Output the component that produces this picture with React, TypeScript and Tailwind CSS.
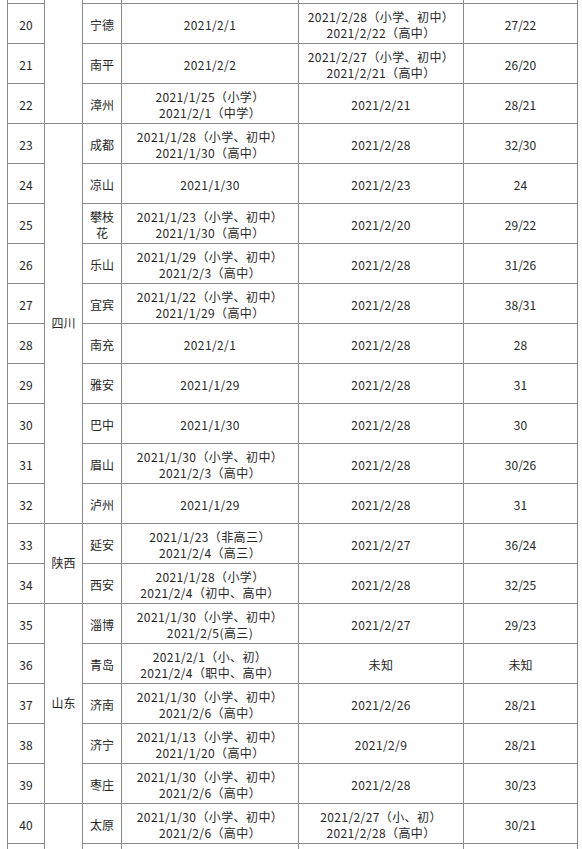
type Row = {
  no: number;
  city: string;
  start: string[];
  end: string[];
  days: string;
};

type Group = {
  province: string;
  rows: Row[];
  // group continues above / below the visible part
  openTop?: boolean;
  openBottom?: boolean;
};

const groups: Group[] = [
  {
    province: "",
    openTop: true,
    rows: [
      { no: 20, city: "宁德", start: ["2021/2/1"], end: ["2021/2/28（小学、初中）", "2021/2/22（高中）"], days: "27/22" },
      { no: 21, city: "南平", start: ["2021/2/2"], end: ["2021/2/27（小学、初中）", "2021/2/21（高中）"], days: "26/20" },
      { no: 22, city: "漳州", start: ["2021/1/25（小学）", "2021/2/1（中学）"], end: ["2021/2/21"], days: "28/21" },
    ],
  },
  {
    province: "四川",
    rows: [
      { no: 23, city: "成都", start: ["2021/1/28（小学、初中）", "2021/1/30（高中）"], end: ["2021/2/28"], days: "32/30" },
      { no: 24, city: "凉山", start: ["2021/1/30"], end: ["2021/2/23"], days: "24" },
      { no: 25, city: "攀枝花", start: ["2021/1/23（小学、初中）", "2021/1/30（高中）"], end: ["2021/2/20"], days: "29/22" },
      { no: 26, city: "乐山", start: ["2021/1/29（小学、初中）", "2021/2/3（高中）"], end: ["2021/2/28"], days: "31/26" },
      { no: 27, city: "宜宾", start: ["2021/1/22（小学、初中）", "2021/1/29（高中）"], end: ["2021/2/28"], days: "38/31" },
      { no: 28, city: "南充", start: ["2021/2/1"], end: ["2021/2/28"], days: "28" },
      { no: 29, city: "雅安", start: ["2021/1/29"], end: ["2021/2/28"], days: "31" },
      { no: 30, city: "巴中", start: ["2021/1/30"], end: ["2021/2/28"], days: "30" },
      { no: 31, city: "眉山", start: ["2021/1/30（小学、初中）", "2021/2/3（高中）"], end: ["2021/2/28"], days: "30/26" },
      { no: 32, city: "泸州", start: ["2021/1/29"], end: ["2021/2/28"], days: "31" },
    ],
  },
  {
    province: "陕西",
    rows: [
      { no: 33, city: "延安", start: ["2021/1/23（非高三）", "2021/2/4（高三）"], end: ["2021/2/27"], days: "36/24" },
      { no: 34, city: "西安", start: ["2021/1/28（小学）", "2021/2/4（初中、高中）"], end: ["2021/2/28"], days: "32/25" },
    ],
  },
  {
    province: "山东",
    rows: [
      { no: 35, city: "淄博", start: ["2021/1/30（小学、初中）", "2021/2/5(高三)"], end: ["2021/2/27"], days: "29/23" },
      { no: 36, city: "青岛", start: ["2021/2/1（小、初）", "2021/2/4（职中、高中）"], end: ["未知"], days: "未知" },
      { no: 37, city: "济南", start: ["2021/1/30（小学、初中）", "2021/2/6（高中）"], end: ["2021/2/26"], days: "28/21" },
      { no: 38, city: "济宁", start: ["2021/1/13（小学、初中）", "2021/1/20（高中）"], end: ["2021/2/9"], days: "28/21" },
      { no: 39, city: "枣庄", start: ["2021/1/30（小学、初中）", "2021/2/6（高中）"], end: ["2021/2/28"], days: "30/23" },
    ],
  },
  {
    province: "",
    openBottom: true,
    rows: [
      { no: 40, city: "太原", start: ["2021/1/30（小学、初中）", "2021/2/6（高中）"], end: ["2021/2/27（小、初）", "2021/2/28（高中）"], days: "30/21" },
    ],
  },
];

const cell = "border border-[#8a8a8a] p-0 text-center align-middle";
const body = `${cell} pt-[4px]`;

function Lines({ items }: { items: string[] }) {
  return (
    <>
      {items.map((t, i) => (
        <div key={i} className="whitespace-nowrap tracking-[0.4px]">
          {t}
        </div>
      ))}
    </>
  );
}

export default function App() {
  return (
    <div
      className="w-[582px] h-[849px] overflow-hidden bg-white pl-[7px] text-[12px] leading-[16px] text-[#262626]"
      style={{ fontFamily: '"Noto Sans CJK SC", "DejaVu Sans", sans-serif' }}
    >
      <table className="table-fixed border-collapse w-[570px]">
        <colgroup>
          <col className="w-[37px]" />
          <col className="w-[38px]" />
          <col className="w-[39px]" />
          <col className="w-[177px]" />
          <col className="w-[165px]" />
          <col className="w-[114px]" />
        </colgroup>
        <tbody>
          {groups.map((g, gi) => {
            const span = g.rows.length + (g.openTop ? 1 : 0) + (g.openBottom ? 1 : 0);
            const provinceCell = (
              <td rowSpan={span} className={`${cell} ${g.openTop ? "border-t-0" : ""} ${g.openBottom ? "border-b-0" : ""}`}>
                {g.province}
              </td>
            );
            return [
              g.openTop && (
                <tr key={`top-${gi}`} className="h-[3px]">
                  <td className={`${cell} border-t-0`} />
                  {provinceCell}
                  <td className={`${cell} border-t-0`} />
                  <td className={`${cell} border-t-0`} />
                  <td className={`${cell} border-t-0`} />
                  <td className={`${cell} border-t-0`} />
                </tr>
              ),
              ...g.rows.map((r, ri) => (
                <tr key={r.no} className="h-[40px]">
                  <td className={body}>{r.no}</td>
                  {!g.openTop && ri === 0 && provinceCell}
                  <td className={`${body} px-1`}>{r.city}</td>
                  <td className={body}>
                    <Lines items={r.start} />
                  </td>
                  <td className={body}>
                    <Lines items={r.end} />
                  </td>
                  <td className={body}>{r.days}</td>
                </tr>
              )),
              g.openBottom && (
                <tr key={`bottom-${gi}`} className="h-[6px]">
                  <td className={`${cell} border-b-0`} />
                  <td className={`${cell} border-b-0`} />
                  <td className={`${cell} border-b-0`} />
                  <td className={`${cell} border-b-0`} />
                  <td className={`${cell} border-b-0`} />
                </tr>
              ),
            ];
          })}
        </tbody>
      </table>
    </div>
  );
}
